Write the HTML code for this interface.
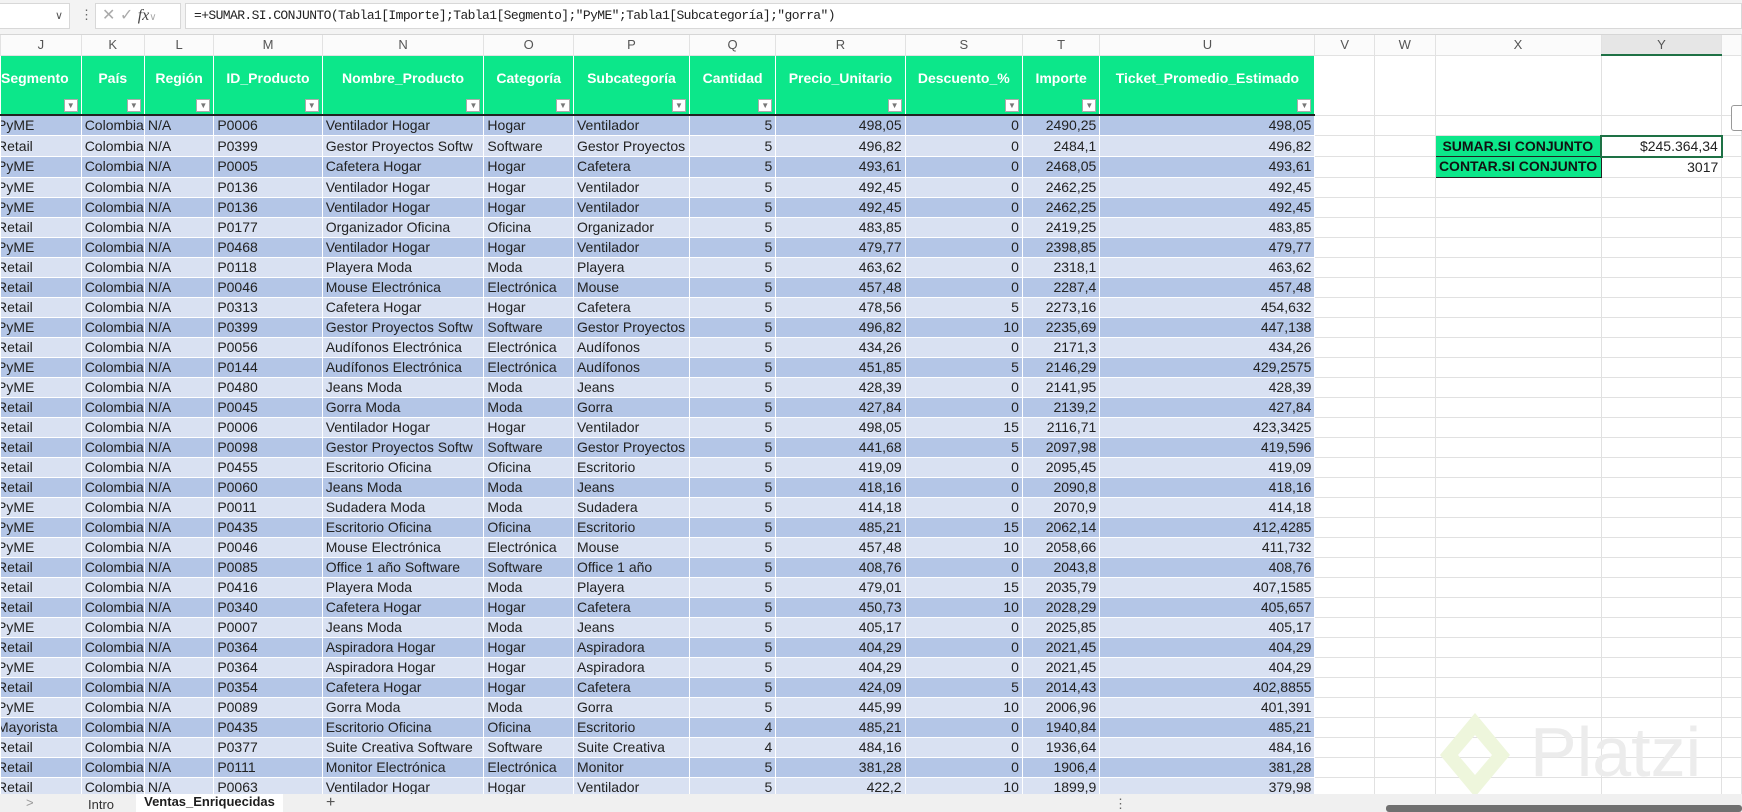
<!DOCTYPE html>
<html><head><meta charset="utf-8"><style>
*{margin:0;padding:0;box-sizing:border-box}
body{width:1742px;height:812px;overflow:hidden;background:#fff;font-family:"Liberation Sans",sans-serif;position:relative}
#fb{position:absolute;left:0;top:0;width:1742px;height:35px;background:#f3f3f3;border-bottom:1px solid #d6d6d6}
#fbin{position:absolute;left:185px;top:3px;right:0;height:26px;background:#fff;border:1px solid #d8d8d8;font-family:"Liberation Mono",monospace;font-size:13px;line-height:24px;padding-left:8px;color:#222;letter-spacing:-0.6px}
table{position:absolute;left:0;top:35px;border-collapse:collapse;table-layout:fixed;font-size:14px;color:#222}
td{height:20px;overflow:hidden;white-space:nowrap;padding:0 3px;line-height:19px}
tr.cl td{height:19px;background:#fbfbfb;color:#555;text-align:center;font-size:13px;border:1px solid #e2e2e2;border-top:none}
tr.hd td.g{height:60px;background:#0ce78a;color:#fff;font-weight:bold;text-align:center;border:1px solid #fff;border-bottom:2px solid #222;position:relative;font-size:14px;padding-bottom:12px}
tr.hd td.g i{position:absolute;right:3px;bottom:2px;width:14px;height:13px;background:#fff;border:1px solid #aaa;font-style:normal;font-size:8px;line-height:11px;color:#777;text-align:center;font-weight:normal}
td.e{border:1px solid #e1e1e1;background:#fff}
tr.d td.c{background:#b4c6e7;border:1px solid #fff}
tr.l td.c{background:#d9e1f2;border:1px solid #fff}
td.r{text-align:right}
td.j{text-indent:-8px}
td.k{padding-right:0;text-overflow:clip}
td.sx{background:#0ce78a;font-weight:bold;color:#111;border:1px solid #222;text-align:center}
#tabs{position:absolute;left:0;top:794px;width:1742px;height:18px;background:#f0f0f0;font-size:13px;color:#333}
</style></head><body>
<div id="fb">
<div style="position:absolute;left:0;top:3px;width:70px;height:26px;background:#fff;border:1px solid #d8d8d8;border-left:none;font-size:11px;color:#555;text-align:right;padding-right:6px;line-height:24px">&#8744;</div>
<div style="position:absolute;left:80px;top:7px;color:#666;font-size:13px">&#8942;</div>
<div style="position:absolute;left:95px;top:3px;width:86px;height:26px;background:#fff;border:1px solid #d8d8d8;color:#aaa;font-size:16px;line-height:24px;padding-left:6px">&#10005; &#10003; <span style="font-family:'Liberation Serif',serif;font-style:italic;color:#444">fx</span><span style="font-size:10px">&#8744;</span></div>
<div id="fbin">=+SUMAR.SI.CONJUNTO(Tabla1[Importe];Tabla1[Segmento];"PyME";Tabla1[Subcategoría];"gorra")</div>
</div>
<table>
<colgroup><col style="width:81px"><col style="width:61px"><col style="width:70px"><col style="width:109px"><col style="width:162px"><col style="width:90px"><col style="width:116px"><col style="width:87px"><col style="width:130px"><col style="width:118px"><col style="width:78px"><col style="width:216px"><col style="width:61px"><col style="width:62px"><col style="width:166px"><col style="width:122px"><col style="width:20px"></colgroup>
<tr class="cl"><td>J</td><td>K</td><td>L</td><td>M</td><td>N</td><td>O</td><td>P</td><td>Q</td><td>R</td><td>S</td><td>T</td><td>U</td><td>V</td><td>W</td><td>X</td><td style="background:#e6e6e6;border-bottom:2px solid #1e7145">Y</td><td></td></tr>
<tr class="hd"><td class="g" style="text-align:left;padding-left:0">Segmento<i>▼</i></td><td class="g">País<i>▼</i></td><td class="g">Región<i>▼</i></td><td class="g">ID_Producto<i>▼</i></td><td class="g">Nombre_Producto<i>▼</i></td><td class="g">Categoría<i>▼</i></td><td class="g">Subcategoría<i>▼</i></td><td class="g">Cantidad<i>▼</i></td><td class="g">Precio_Unitario<i>▼</i></td><td class="g">Descuento_%<i>▼</i></td><td class="g">Importe<i>▼</i></td><td class="g">Ticket_Promedio_Estimado<i>▼</i></td><td class="e"></td><td class="e"></td><td class="e"></td><td class="e"></td><td class="e"></td></tr>
<tr class="d"><td class="c j">PyME</td><td class="c k">Colombia</td><td class="c">N/A</td><td class="c">P0006</td><td class="c">Ventilador Hogar</td><td class="c">Hogar</td><td class="c">Ventilador</td><td class="c r">5</td><td class="c r">498,05</td><td class="c r">0</td><td class="c r">2490,25</td><td class="c r">498,05</td><td class="e"></td><td class="e"></td><td class="e"></td><td class="e"></td><td class="e"></td></tr>
<tr class="l"><td class="c j">Retail</td><td class="c k">Colombia</td><td class="c">N/A</td><td class="c">P0399</td><td class="c">Gestor Proyectos Softw</td><td class="c">Software</td><td class="c">Gestor Proyectos</td><td class="c r">5</td><td class="c r">496,82</td><td class="c r">0</td><td class="c r">2484,1</td><td class="c r">496,82</td><td class="e"></td><td class="e"></td><td class="sx">SUMAR.SI CONJUNTO</td><td class="e r" style="border:2px solid #1e7145">$245.364,34</td><td class="e"></td></tr>
<tr class="d"><td class="c j">PyME</td><td class="c k">Colombia</td><td class="c">N/A</td><td class="c">P0005</td><td class="c">Cafetera Hogar</td><td class="c">Hogar</td><td class="c">Cafetera</td><td class="c r">5</td><td class="c r">493,61</td><td class="c r">0</td><td class="c r">2468,05</td><td class="c r">493,61</td><td class="e"></td><td class="e"></td><td class="sx">CONTAR.SI CONJUNTO</td><td class="e r">3017</td><td class="e"></td></tr>
<tr class="l"><td class="c j">PyME</td><td class="c k">Colombia</td><td class="c">N/A</td><td class="c">P0136</td><td class="c">Ventilador Hogar</td><td class="c">Hogar</td><td class="c">Ventilador</td><td class="c r">5</td><td class="c r">492,45</td><td class="c r">0</td><td class="c r">2462,25</td><td class="c r">492,45</td><td class="e"></td><td class="e"></td><td class="e"></td><td class="e"></td><td class="e"></td></tr>
<tr class="d"><td class="c j">PyME</td><td class="c k">Colombia</td><td class="c">N/A</td><td class="c">P0136</td><td class="c">Ventilador Hogar</td><td class="c">Hogar</td><td class="c">Ventilador</td><td class="c r">5</td><td class="c r">492,45</td><td class="c r">0</td><td class="c r">2462,25</td><td class="c r">492,45</td><td class="e"></td><td class="e"></td><td class="e"></td><td class="e"></td><td class="e"></td></tr>
<tr class="l"><td class="c j">Retail</td><td class="c k">Colombia</td><td class="c">N/A</td><td class="c">P0177</td><td class="c">Organizador Oficina</td><td class="c">Oficina</td><td class="c">Organizador</td><td class="c r">5</td><td class="c r">483,85</td><td class="c r">0</td><td class="c r">2419,25</td><td class="c r">483,85</td><td class="e"></td><td class="e"></td><td class="e"></td><td class="e"></td><td class="e"></td></tr>
<tr class="d"><td class="c j">PyME</td><td class="c k">Colombia</td><td class="c">N/A</td><td class="c">P0468</td><td class="c">Ventilador Hogar</td><td class="c">Hogar</td><td class="c">Ventilador</td><td class="c r">5</td><td class="c r">479,77</td><td class="c r">0</td><td class="c r">2398,85</td><td class="c r">479,77</td><td class="e"></td><td class="e"></td><td class="e"></td><td class="e"></td><td class="e"></td></tr>
<tr class="l"><td class="c j">Retail</td><td class="c k">Colombia</td><td class="c">N/A</td><td class="c">P0118</td><td class="c">Playera Moda</td><td class="c">Moda</td><td class="c">Playera</td><td class="c r">5</td><td class="c r">463,62</td><td class="c r">0</td><td class="c r">2318,1</td><td class="c r">463,62</td><td class="e"></td><td class="e"></td><td class="e"></td><td class="e"></td><td class="e"></td></tr>
<tr class="d"><td class="c j">Retail</td><td class="c k">Colombia</td><td class="c">N/A</td><td class="c">P0046</td><td class="c">Mouse Electrónica</td><td class="c">Electrónica</td><td class="c">Mouse</td><td class="c r">5</td><td class="c r">457,48</td><td class="c r">0</td><td class="c r">2287,4</td><td class="c r">457,48</td><td class="e"></td><td class="e"></td><td class="e"></td><td class="e"></td><td class="e"></td></tr>
<tr class="l"><td class="c j">Retail</td><td class="c k">Colombia</td><td class="c">N/A</td><td class="c">P0313</td><td class="c">Cafetera Hogar</td><td class="c">Hogar</td><td class="c">Cafetera</td><td class="c r">5</td><td class="c r">478,56</td><td class="c r">5</td><td class="c r">2273,16</td><td class="c r">454,632</td><td class="e"></td><td class="e"></td><td class="e"></td><td class="e"></td><td class="e"></td></tr>
<tr class="d"><td class="c j">PyME</td><td class="c k">Colombia</td><td class="c">N/A</td><td class="c">P0399</td><td class="c">Gestor Proyectos Softw</td><td class="c">Software</td><td class="c">Gestor Proyectos</td><td class="c r">5</td><td class="c r">496,82</td><td class="c r">10</td><td class="c r">2235,69</td><td class="c r">447,138</td><td class="e"></td><td class="e"></td><td class="e"></td><td class="e"></td><td class="e"></td></tr>
<tr class="l"><td class="c j">Retail</td><td class="c k">Colombia</td><td class="c">N/A</td><td class="c">P0056</td><td class="c">Audífonos Electrónica</td><td class="c">Electrónica</td><td class="c">Audífonos</td><td class="c r">5</td><td class="c r">434,26</td><td class="c r">0</td><td class="c r">2171,3</td><td class="c r">434,26</td><td class="e"></td><td class="e"></td><td class="e"></td><td class="e"></td><td class="e"></td></tr>
<tr class="d"><td class="c j">PyME</td><td class="c k">Colombia</td><td class="c">N/A</td><td class="c">P0144</td><td class="c">Audífonos Electrónica</td><td class="c">Electrónica</td><td class="c">Audífonos</td><td class="c r">5</td><td class="c r">451,85</td><td class="c r">5</td><td class="c r">2146,29</td><td class="c r">429,2575</td><td class="e"></td><td class="e"></td><td class="e"></td><td class="e"></td><td class="e"></td></tr>
<tr class="l"><td class="c j">PyME</td><td class="c k">Colombia</td><td class="c">N/A</td><td class="c">P0480</td><td class="c">Jeans Moda</td><td class="c">Moda</td><td class="c">Jeans</td><td class="c r">5</td><td class="c r">428,39</td><td class="c r">0</td><td class="c r">2141,95</td><td class="c r">428,39</td><td class="e"></td><td class="e"></td><td class="e"></td><td class="e"></td><td class="e"></td></tr>
<tr class="d"><td class="c j">Retail</td><td class="c k">Colombia</td><td class="c">N/A</td><td class="c">P0045</td><td class="c">Gorra Moda</td><td class="c">Moda</td><td class="c">Gorra</td><td class="c r">5</td><td class="c r">427,84</td><td class="c r">0</td><td class="c r">2139,2</td><td class="c r">427,84</td><td class="e"></td><td class="e"></td><td class="e"></td><td class="e"></td><td class="e"></td></tr>
<tr class="l"><td class="c j">Retail</td><td class="c k">Colombia</td><td class="c">N/A</td><td class="c">P0006</td><td class="c">Ventilador Hogar</td><td class="c">Hogar</td><td class="c">Ventilador</td><td class="c r">5</td><td class="c r">498,05</td><td class="c r">15</td><td class="c r">2116,71</td><td class="c r">423,3425</td><td class="e"></td><td class="e"></td><td class="e"></td><td class="e"></td><td class="e"></td></tr>
<tr class="d"><td class="c j">Retail</td><td class="c k">Colombia</td><td class="c">N/A</td><td class="c">P0098</td><td class="c">Gestor Proyectos Softw</td><td class="c">Software</td><td class="c">Gestor Proyectos</td><td class="c r">5</td><td class="c r">441,68</td><td class="c r">5</td><td class="c r">2097,98</td><td class="c r">419,596</td><td class="e"></td><td class="e"></td><td class="e"></td><td class="e"></td><td class="e"></td></tr>
<tr class="l"><td class="c j">Retail</td><td class="c k">Colombia</td><td class="c">N/A</td><td class="c">P0455</td><td class="c">Escritorio Oficina</td><td class="c">Oficina</td><td class="c">Escritorio</td><td class="c r">5</td><td class="c r">419,09</td><td class="c r">0</td><td class="c r">2095,45</td><td class="c r">419,09</td><td class="e"></td><td class="e"></td><td class="e"></td><td class="e"></td><td class="e"></td></tr>
<tr class="d"><td class="c j">Retail</td><td class="c k">Colombia</td><td class="c">N/A</td><td class="c">P0060</td><td class="c">Jeans Moda</td><td class="c">Moda</td><td class="c">Jeans</td><td class="c r">5</td><td class="c r">418,16</td><td class="c r">0</td><td class="c r">2090,8</td><td class="c r">418,16</td><td class="e"></td><td class="e"></td><td class="e"></td><td class="e"></td><td class="e"></td></tr>
<tr class="l"><td class="c j">PyME</td><td class="c k">Colombia</td><td class="c">N/A</td><td class="c">P0011</td><td class="c">Sudadera Moda</td><td class="c">Moda</td><td class="c">Sudadera</td><td class="c r">5</td><td class="c r">414,18</td><td class="c r">0</td><td class="c r">2070,9</td><td class="c r">414,18</td><td class="e"></td><td class="e"></td><td class="e"></td><td class="e"></td><td class="e"></td></tr>
<tr class="d"><td class="c j">PyME</td><td class="c k">Colombia</td><td class="c">N/A</td><td class="c">P0435</td><td class="c">Escritorio Oficina</td><td class="c">Oficina</td><td class="c">Escritorio</td><td class="c r">5</td><td class="c r">485,21</td><td class="c r">15</td><td class="c r">2062,14</td><td class="c r">412,4285</td><td class="e"></td><td class="e"></td><td class="e"></td><td class="e"></td><td class="e"></td></tr>
<tr class="l"><td class="c j">PyME</td><td class="c k">Colombia</td><td class="c">N/A</td><td class="c">P0046</td><td class="c">Mouse Electrónica</td><td class="c">Electrónica</td><td class="c">Mouse</td><td class="c r">5</td><td class="c r">457,48</td><td class="c r">10</td><td class="c r">2058,66</td><td class="c r">411,732</td><td class="e"></td><td class="e"></td><td class="e"></td><td class="e"></td><td class="e"></td></tr>
<tr class="d"><td class="c j">Retail</td><td class="c k">Colombia</td><td class="c">N/A</td><td class="c">P0085</td><td class="c">Office 1 año Software</td><td class="c">Software</td><td class="c">Office 1 año</td><td class="c r">5</td><td class="c r">408,76</td><td class="c r">0</td><td class="c r">2043,8</td><td class="c r">408,76</td><td class="e"></td><td class="e"></td><td class="e"></td><td class="e"></td><td class="e"></td></tr>
<tr class="l"><td class="c j">Retail</td><td class="c k">Colombia</td><td class="c">N/A</td><td class="c">P0416</td><td class="c">Playera Moda</td><td class="c">Moda</td><td class="c">Playera</td><td class="c r">5</td><td class="c r">479,01</td><td class="c r">15</td><td class="c r">2035,79</td><td class="c r">407,1585</td><td class="e"></td><td class="e"></td><td class="e"></td><td class="e"></td><td class="e"></td></tr>
<tr class="d"><td class="c j">Retail</td><td class="c k">Colombia</td><td class="c">N/A</td><td class="c">P0340</td><td class="c">Cafetera Hogar</td><td class="c">Hogar</td><td class="c">Cafetera</td><td class="c r">5</td><td class="c r">450,73</td><td class="c r">10</td><td class="c r">2028,29</td><td class="c r">405,657</td><td class="e"></td><td class="e"></td><td class="e"></td><td class="e"></td><td class="e"></td></tr>
<tr class="l"><td class="c j">PyME</td><td class="c k">Colombia</td><td class="c">N/A</td><td class="c">P0007</td><td class="c">Jeans Moda</td><td class="c">Moda</td><td class="c">Jeans</td><td class="c r">5</td><td class="c r">405,17</td><td class="c r">0</td><td class="c r">2025,85</td><td class="c r">405,17</td><td class="e"></td><td class="e"></td><td class="e"></td><td class="e"></td><td class="e"></td></tr>
<tr class="d"><td class="c j">Retail</td><td class="c k">Colombia</td><td class="c">N/A</td><td class="c">P0364</td><td class="c">Aspiradora Hogar</td><td class="c">Hogar</td><td class="c">Aspiradora</td><td class="c r">5</td><td class="c r">404,29</td><td class="c r">0</td><td class="c r">2021,45</td><td class="c r">404,29</td><td class="e"></td><td class="e"></td><td class="e"></td><td class="e"></td><td class="e"></td></tr>
<tr class="l"><td class="c j">PyME</td><td class="c k">Colombia</td><td class="c">N/A</td><td class="c">P0364</td><td class="c">Aspiradora Hogar</td><td class="c">Hogar</td><td class="c">Aspiradora</td><td class="c r">5</td><td class="c r">404,29</td><td class="c r">0</td><td class="c r">2021,45</td><td class="c r">404,29</td><td class="e"></td><td class="e"></td><td class="e"></td><td class="e"></td><td class="e"></td></tr>
<tr class="d"><td class="c j">Retail</td><td class="c k">Colombia</td><td class="c">N/A</td><td class="c">P0354</td><td class="c">Cafetera Hogar</td><td class="c">Hogar</td><td class="c">Cafetera</td><td class="c r">5</td><td class="c r">424,09</td><td class="c r">5</td><td class="c r">2014,43</td><td class="c r">402,8855</td><td class="e"></td><td class="e"></td><td class="e"></td><td class="e"></td><td class="e"></td></tr>
<tr class="l"><td class="c j">PyME</td><td class="c k">Colombia</td><td class="c">N/A</td><td class="c">P0089</td><td class="c">Gorra Moda</td><td class="c">Moda</td><td class="c">Gorra</td><td class="c r">5</td><td class="c r">445,99</td><td class="c r">10</td><td class="c r">2006,96</td><td class="c r">401,391</td><td class="e"></td><td class="e"></td><td class="e"></td><td class="e"></td><td class="e"></td></tr>
<tr class="d"><td class="c j">Mayorista</td><td class="c k">Colombia</td><td class="c">N/A</td><td class="c">P0435</td><td class="c">Escritorio Oficina</td><td class="c">Oficina</td><td class="c">Escritorio</td><td class="c r">4</td><td class="c r">485,21</td><td class="c r">0</td><td class="c r">1940,84</td><td class="c r">485,21</td><td class="e"></td><td class="e"></td><td class="e"></td><td class="e"></td><td class="e"></td></tr>
<tr class="l"><td class="c j">Retail</td><td class="c k">Colombia</td><td class="c">N/A</td><td class="c">P0377</td><td class="c">Suite Creativa Software</td><td class="c">Software</td><td class="c">Suite Creativa</td><td class="c r">4</td><td class="c r">484,16</td><td class="c r">0</td><td class="c r">1936,64</td><td class="c r">484,16</td><td class="e"></td><td class="e"></td><td class="e"></td><td class="e"></td><td class="e"></td></tr>
<tr class="d"><td class="c j">Retail</td><td class="c k">Colombia</td><td class="c">N/A</td><td class="c">P0111</td><td class="c">Monitor Electrónica</td><td class="c">Electrónica</td><td class="c">Monitor</td><td class="c r">5</td><td class="c r">381,28</td><td class="c r">0</td><td class="c r">1906,4</td><td class="c r">381,28</td><td class="e"></td><td class="e"></td><td class="e"></td><td class="e"></td><td class="e"></td></tr>
<tr class="l"><td class="c j">Retail</td><td class="c k">Colombia</td><td class="c">N/A</td><td class="c">P0063</td><td class="c">Ventilador Hogar</td><td class="c">Hogar</td><td class="c">Ventilador</td><td class="c r">5</td><td class="c r">422,2</td><td class="c r">10</td><td class="c r">1899,9</td><td class="c r">379,98</td><td class="e"></td><td class="e"></td><td class="e"></td><td class="e"></td><td class="e"></td></tr>
</table>
<svg style="position:absolute;left:1430px;top:705px" width="90" height="100"><path d="M45 8 L80 50 L45 92 L10 50 Z M45 30 L62 50 L45 70 L28 50 Z" fill="#eef6dc" fill-rule="evenodd"/></svg>
<div style="position:absolute;left:1530px;top:712px;font-size:70px;color:#ececec;font-family:'Liberation Sans',sans-serif">Platzi</div>
<div style="position:absolute;left:1731px;top:105px;width:14px;height:26px;border:1px solid #999;border-radius:3px;background:#fff"></div>
<div id="tabs">
<span style="position:absolute;left:26px;top:1px;color:#999">&gt;</span>
<span style="position:absolute;left:88px;top:3px">Intro</span>
<div style="position:absolute;left:136px;top:0;width:147px;height:18px;background:#fff;font-weight:bold;color:#1e1e1e;text-align:center;line-height:16px;font-size:13px">Ventas_Enriquecidas</div>
<span style="position:absolute;left:326px;top:0;font-size:16px;color:#555">+</span>
<span style="position:absolute;left:1114px;top:2px;color:#666">&#8942;</span>
<div style="position:absolute;left:1386px;top:11px;width:356px;height:7px;background:#707070;border-radius:3px"></div>
</div>
</body></html>
